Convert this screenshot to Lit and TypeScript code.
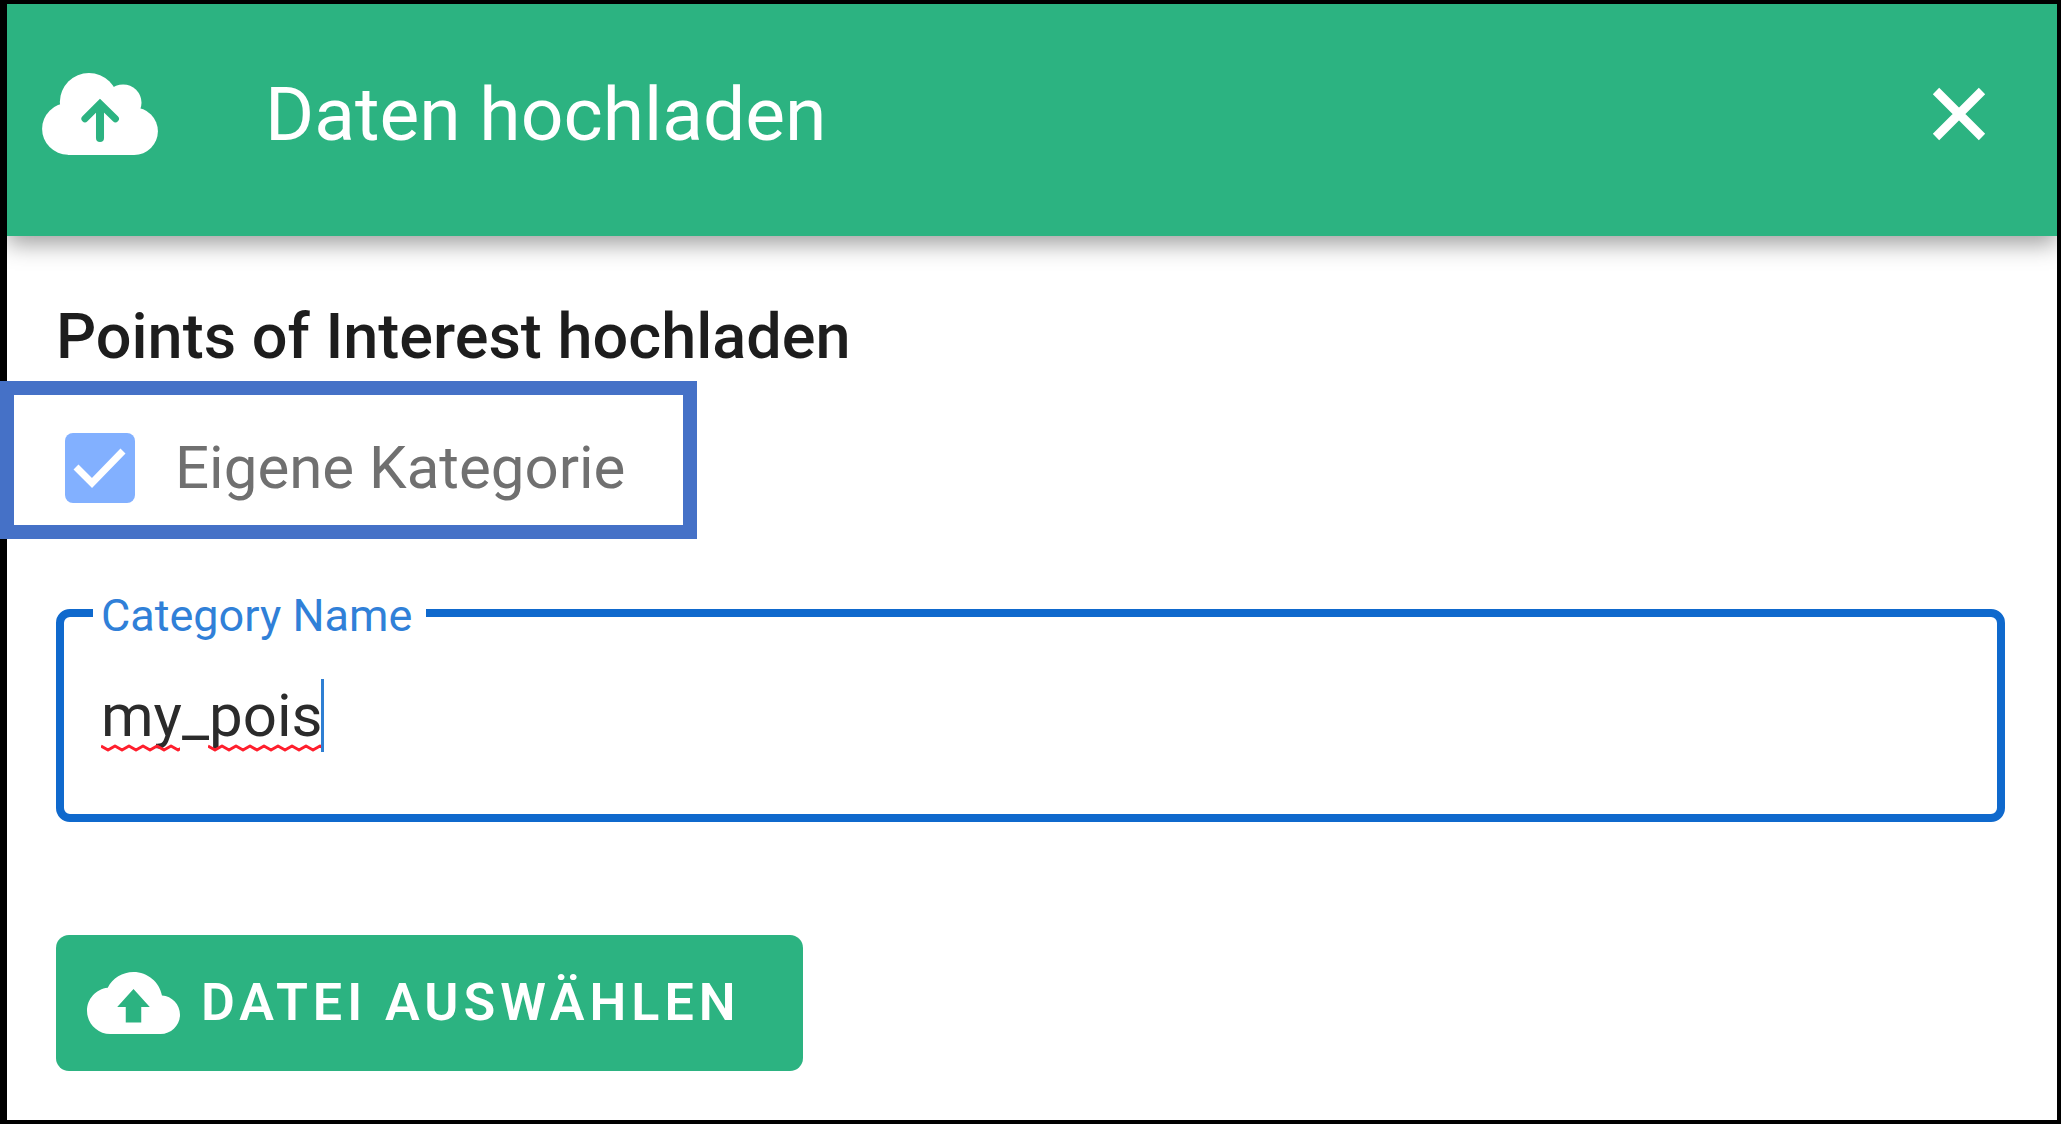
import { LitElement, html, css, svg } from "lit";
import { customElement, state } from "lit/decorators.js";

const squiggle = (width: number) => {
  let d = "M0 2";
  for (let x = 7, up = false; x <= width + 7; x += 7, up = !up) {
    d += ` L${x} ${up ? 2 : 6}`;
  }
  return html`<svg class="squiggle" width=${width} height="8" aria-hidden="true">
    ${svg`<path d=${d} fill="none" stroke="#ff1f2d" stroke-width="3" stroke-linejoin="round" />`}
  </svg>`;
};

@customElement("app-root")
export class AppRoot extends LitElement {
  static styles = css`
    :host {
      display: block;
      font-family: Roboto, "Liberation Sans", sans-serif;
      color: #1d1d1d;
    }
    * {
      box-sizing: border-box;
    }
    .frame {
      min-height: 100vh;
      display: flex;
      flex-direction: column;
      background: #fff;
      border: 4px solid #000;
      border-left-width: 7px;
    }
    .clip {
      flex: 1;
      clip-path: inset(0 0 0 -7px);
    }
    .bar {
      display: flex;
      align-items: center;
      padding: 55px 71px 67px 35px;
      background: #2cb381;
      box-shadow: 0 8px 22px rgba(0, 0, 0, 0.38);
      color: #fff;
    }
    .bar-icon {
      width: 116px;
      height: 82px;
    }
    .title {
      flex: 1;
      margin: 0 0 0 107px;
      font-size: 75px;
      font-weight: 400;
      line-height: 110px;
    }
    .close {
      display: flex;
      padding: 0;
      border: 0;
      background: none;
      color: inherit;
    }
    .body {
      padding: 65px 52px 48px 49px;
    }
    .heading {
      margin: 0 0 8px;
      font-size: 63px;
      font-weight: 500;
      line-height: 72px;
    }
    .highlight {
      display: flex;
      align-items: center;
      gap: 40px;
      width: fit-content;
      margin-left: -56px;
      padding: 37px 58px 21px 51px;
      border: 14px solid #4571c7;
    }
    .tick {
      display: grid;
    }
    .tick > * {
      grid-area: 1 / 1;
    }
    .box {
      appearance: none;
      width: 70px;
      height: 70px;
      margin: 0;
      border-radius: 8px;
      background: #82b0ff;
    }
    .mark {
      pointer-events: none;
    }
    .option {
      font-size: 60px;
      line-height: 72px;
      color: #707070;
    }
    .field {
      min-width: 0;
      margin: 48px 0 0;
      padding: 41px 37px 62px;
      border: 8px solid #0f69cd;
      border-radius: 14px;
    }
    .legend {
      margin-left: -8px;
      padding: 6px 14px 0 8px;
      font-size: 45px;
      line-height: 46px;
      color: #3080d8;
    }
    .entry {
      position: relative;
      display: flex;
    }
    .input {
      flex: 1;
      min-width: 0;
      height: 72px;
      padding: 0;
      border: 0;
      outline: 0;
      background: none;
      font: 400 60px/72px Roboto, "Liberation Sans", sans-serif;
      color: #2b2b2b;
      caret-color: transparent;
    }
    .overlay {
      position: absolute;
      top: 0;
      left: 0;
      height: 72px;
      display: flex;
      align-items: flex-end;
      pointer-events: none;
    }
    .squiggle {
      display: block;
    }
    .squiggle + .squiggle {
      margin-left: 28px;
    }
    .caret {
      width: 3px;
      height: 73px;
      background: #2f7fd3;
    }
    .pick {
      display: flex;
      align-items: center;
      gap: 21px;
      margin: 113px 0 0;
      padding: 32px 62px 32px 31px;
      border: 0;
      border-radius: 13px;
      background: #2cb381;
      color: #fff;
      font: 600 52px/72px Roboto, "Liberation Sans", sans-serif;
      letter-spacing: 5px;
      text-transform: uppercase;
    }
  `;

  @state() private category = "my_pois";

  private onInput(e: Event) {
    this.category = (e.target as HTMLInputElement).value;
  }

  render() {
    return html`
      <div class="frame">
        <div class="clip">
          <header class="bar">
            <svg class="bar-icon" viewBox="125 218 346 245" aria-hidden="true">
              <g fill="#fff">
                <circle cx="202" cy="385" r="77" />
                <circle cx="400" cy="392" r="71" />
                <circle cx="265" cy="305" r="87" />
                <circle cx="367" cy="307" r="55" />
                <path d="M202 300H400V463H202z" />
              </g>
              <g fill="none" stroke="#2cb381" stroke-linecap="round">
                <path d="M298 412V318" stroke-width="24" />
                <path d="M253 355L298 310L344 355" stroke-width="21" />
              </g>
            </svg>
            <h1 class="title">Daten hochladen</h1>
            <button class="close" type="button" aria-label="Schließen">
              <svg width="54" height="54" viewBox="0 0 54 54" aria-hidden="true">
                <path d="M4 4L50 50M50 4L4 50" stroke="#fff" stroke-width="9" />
              </svg>
            </button>
          </header>
          <main class="body">
            <h2 class="heading">Points of Interest hochladen</h2>
            <div class="highlight">
              <span class="tick">
                <input class="box" id="own" type="checkbox" checked disabled />
                <svg class="mark" width="70" height="70" viewBox="0 0 70 70" aria-hidden="true">
                  <path d="M11 34L27 50L58 18" fill="none" stroke="#fff" stroke-width="7" />
                </svg>
              </span>
              <label class="option" for="own">Eigene Kategorie</label>
            </div>
            <fieldset class="field">
              <legend class="legend"><label for="category">Category Name</label></legend>
              <div class="entry">
                <input
                  class="input"
                  id="category"
                  type="text"
                  spellcheck="false"
                  .value=${this.category}
                  @input=${this.onInput}
                />
                ${this.category === "my_pois"
                  ? html`<span class="overlay" aria-hidden="true">
                      ${squiggle(79)}${squiggle(113)}<span class="caret"></span>
                    </span>`
                  : null}
              </div>
            </fieldset>
            <button class="pick" type="button">
              <svg width="93" height="62" viewBox="0 4 24 16" aria-hidden="true">
                <path
                  fill="#fff"
                  d="M19.35 10.04C18.67 6.59 15.64 4 12 4 9.11 4 6.6 5.64 5.35 8.04 2.34 8.36 0 10.91 0 14c0 3.31 2.69 6 6 6h13c2.76 0 5-2.24 5-5 0-2.64-2.05-4.78-4.65-4.96zM14 13v4h-4v-4H7.8L12 8.4l4.2 4.6H14z"
                />
              </svg>
              Datei auswählen
            </button>
          </main>
        </div>
      </div>
    `;
  }
}
